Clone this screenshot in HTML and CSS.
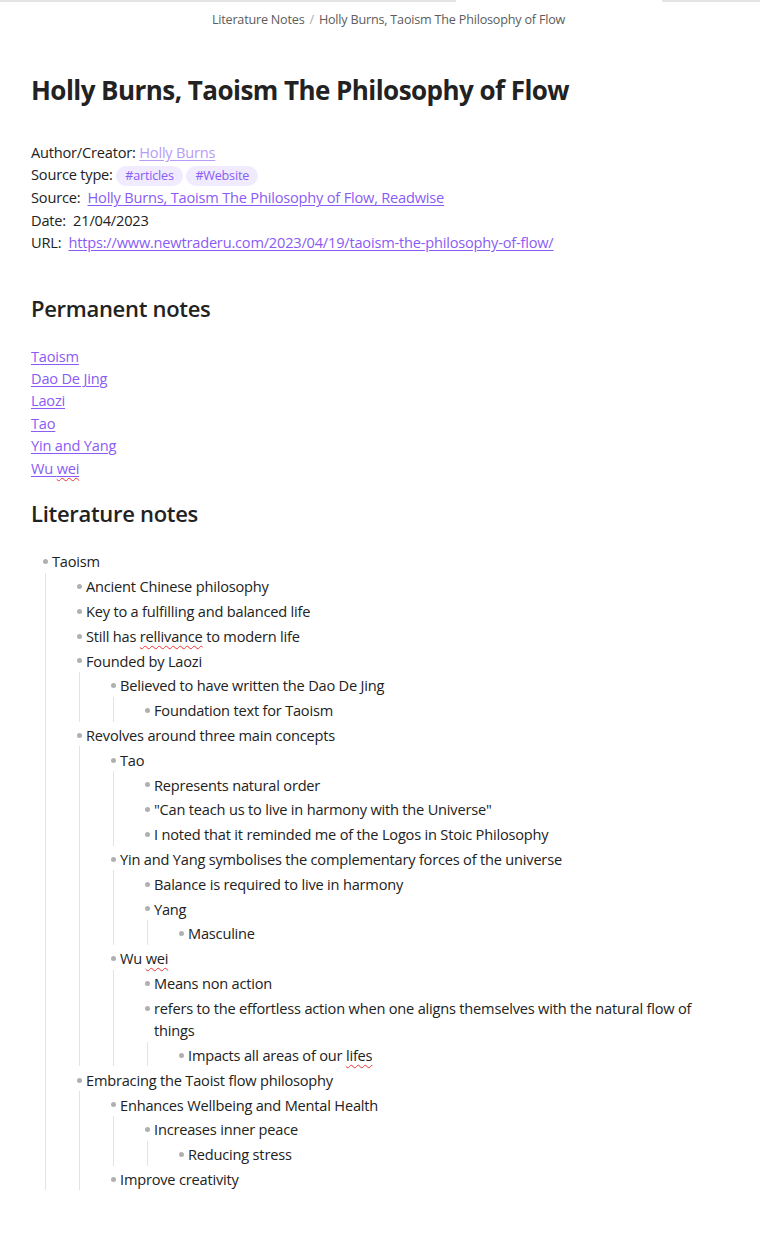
FILE: index.html
```
<!DOCTYPE html>
<html>
<head>
<meta charset="utf-8">
<link rel="stylesheet" href="styles.css">
</head>
<body>
<div class="topbar"><span class="seg seg-a"></span><span class="seg-gap"></span><span class="seg seg-b"></span></div>
<div class="breadcrumb"><span>Literature Notes</span><span class="sep">/</span><span>Holly Burns, Taoism The Philosophy of Flow</span></div>
<main class="note">
  <h1 class="title">Holly Burns, Taoism The Philosophy of Flow</h1>
  <div class="props">
    <div>Author/Creator: <a class="link unresolved">Holly Burns</a></div>
    <div>Source type: <span class="tag">#articles</span> <span class="tag">#Website</span></div>
    <div>Source:&nbsp; <a class="link">Holly Burns, Taoism The Philosophy of Flow, Readwise</a></div>
    <div>Date:&nbsp; 21/04/2023</div>
    <div>URL:&nbsp; <a class="link">https://www.newtraderu.com/2023/04/19/taoism-the-philosophy-of-flow/</a></div>
  </div>
  <h2 class="h2 first-h2">Permanent notes</h2>
  <div class="links">
    <div><a class="link">Taoism</a></div>
    <div><a class="link">Dao De Jing</a></div>
    <div><a class="link">Laozi</a></div>
    <div><a class="link">Tao</a></div>
    <div><a class="link">Yin and Yang</a></div>
    <div><a class="link">Wu <span class="spell">wei</span></a></div>
  </div>
  <h2 class="h2 second-h2">Literature notes</h2>
  <ul class="tree root">
    <li>Taoism
      <ul class="tree">
        <li>Ancient Chinese philosophy</li>
        <li>Key to a fulfilling and balanced life</li>
        <li>Still has <span class="spell">rellivance</span> to modern life</li>
        <li>Founded by Laozi
          <ul class="tree">
            <li>Believed to have written the Dao De Jing
              <ul class="tree">
                <li>Foundation text for Taoism</li>
              </ul>
            </li>
          </ul>
        </li>
        <li>Revolves around three main concepts
          <ul class="tree">
            <li>Tao
              <ul class="tree">
                <li>Represents natural order</li>
                <li>"Can teach us to live in harmony with the Universe"</li>
                <li>I noted that it reminded me of the Logos in Stoic Philosophy</li>
              </ul>
            </li>
            <li>Yin and Yang symbolises the complementary forces of the universe
              <ul class="tree">
                <li>Balance is required to live in harmony</li>
                <li>Yang
                  <ul class="tree">
                    <li>Masculine</li>
                  </ul>
                </li>
              </ul>
            </li>
            <li>Wu <span class="spell">wei</span>
              <ul class="tree">
                <li>Means non action</li>
                <li>refers to the effortless action when one aligns themselves with the natural flow of things
                  <ul class="tree">
                    <li>Impacts all areas of our <span class="spell">lifes</span></li>
                  </ul>
                </li>
              </ul>
            </li>
          </ul>
        </li>
        <li>Embracing the Taoist flow philosophy
          <ul class="tree">
            <li>Enhances Wellbeing and Mental Health
              <ul class="tree">
                <li>Increases inner peace
                  <ul class="tree">
                    <li>Reducing stress</li>
                  </ul>
                </li>
              </ul>
            </li>
            <li>Improve creativity</li>
          </ul>
        </li>
      </ul>
    </li>
  </ul>
</main>
</body>
</html>
```
FILE: styles.css
```
* { box-sizing: border-box; }
html, body { margin: 0; padding: 0; background: #ffffff; }
body {
  font-family: "Open Sans", "Noto Sans", sans-serif;
  color: #222222;
  font-size: 14.6px;
  letter-spacing: -0.2px;
  line-height: 22.4px;
  width: 760px;
}
.topbar { display: flex; height: 2px; }
.seg { background: #e4e4e4; height: 2px; }
.seg-a { width: 456px; }
.seg-gap { width: 206px; }
.seg-b { flex: 1; }
.breadcrumb {
  height: 36px;
  line-height: 36px;
  text-align: center;
  font-size: 12.6px;
  letter-spacing: -0.2px;
  color: #5c5c5c;
  padding-left: 17px;
}
.breadcrumb .sep { color: #aaaaaa; margin: 0 5px; }
.note { padding: 0 40px 0 31px; }
.title {
  font-size: 26px;
  line-height: 34px;
  font-weight: 700;
  margin: 35px 0 0;
  letter-spacing: -0.55px;
}
.props { margin-top: 34px; }
.link { color: #8a5cf5; text-decoration: underline; text-underline-offset: 2px; }
.link.unresolved { color: #b79cf8; }
.tag {
  display: inline-block;
  background: #f0ebfe;
  color: #8a5cf5;
  font-size: 12.6px;
  line-height: 20px;
  padding: 0 9px;
  border-radius: 10px;
}
.h2 { font-size: 22px; line-height: 30px; font-weight: 600; margin: 0; letter-spacing: -0.3px; }
.first-h2 { margin-top: 39px; }
.links { margin-top: 22px; }
.second-h2 { margin-top: 19px; }
.spell { text-decoration: underline wavy #e33; text-decoration-thickness: 1px; text-underline-offset: 3px; }
.tree { list-style: none; margin: 0 0 0 -7px; padding: 0 0 0 40px; border-left: 1px solid #e3e3e3; }
.tree.root { margin: 20px 0 0 21px; padding: 0; border-left: none; }
.tree li { position: relative; padding-top: 2.4px; }
.tree li::before {
  content: "";
  position: absolute;
  left: -9px;
  top: 11.1px;
  width: 5px;
  height: 5px;
  border-radius: 50%;
  background: #b0b0b0;
}
```
